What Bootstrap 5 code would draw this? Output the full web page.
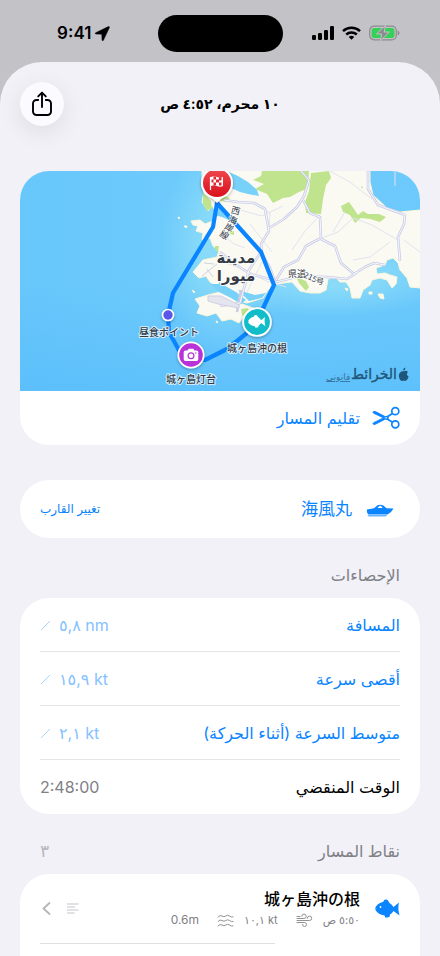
<!DOCTYPE html>
<html lang="ar" dir="rtl">
<head>
<meta charset="utf-8">
<meta name="viewport" content="width=device-width, initial-scale=1">
<title>١٠ محرم، ٤:٥٢ ص</title>
<link href="https://cdn.jsdelivr.net/npm/bootstrap@5.3.0/dist/css/bootstrap.min.css" rel="stylesheet">
<style>
  :root { --blue: #0a84ff; --paper: #f2f1f8; }
  body { background: #c3c2c7; color: #000; font: 17px/24px Inter, "Noto Sans CJK JP", "DejaVu Sans", sans-serif; }
  .screen { height: 100vh; overflow: hidden; }
  .status { height: 62px; flex: none; }
  .status-side { flex: 1; padding-top: 4px; }
  .status-time { padding-left: 10px; }
  .status-icons { padding-right: 10px; }
  .island { width: 125px; height: 37px; border-radius: 19px; background: #000; margin-top: 4px; }
  .sheet { background: var(--paper); border-radius: 42px 42px 0 0; padding: 20px 20px 0; }
  .topbar { display: grid; grid-template-columns: 44px 1fr 44px; align-items: center; margin-bottom: 45px; }
  .topbar h1 { font-size: 14px; line-height: 24px; font-weight: 600; }
  .share { width: 44px; height: 44px; background: #fbfaff; box-shadow: 0 6px 24px rgba(0,0,0,.09); border: 0; }
  .panel { background: #fff; border-radius: 29px; overflow: hidden; flex: none; }
  .panel-open { border-radius: 29px 29px 0 0; flex: 1 0 auto; }
  .map { display: block; width: 100%; height: 220px; }
  .line { height: 54px; padding: 0 20px; }
  .stat:not(:last-child)::after { content: ""; position: absolute; bottom: 0; left: 20px; right: 20px; border-top: 1px solid #e6e6e8; }
  .blue, .blue:hover { color: var(--blue); }
  .value { color: #84c1ff; font-size: 16px; }
  .gray { color: #808085; }
  .faint { color: #b6b6bb; }
  .ar { font-size: 16px; }
  .small-ar { font-size: 12px; line-height: 18px; }
  .boat { height: 58px; margin-top: 35px; padding: 0 20px; }
  .group-title { height: 24px; margin: 25px 0 11px; padding: 0 20px; flex: none; }
  .group-title h2 { font-size: 16px; line-height: 24px; font-weight: 500; }
  .point { height: 69px; padding: 13px 20px 0; }
  .point-name { font-size: 16px; font-weight: 500; }
  .point-side { padding-top: 15px; padding-left: 2px; }
  .point-rule { border-top: 1px solid #e0e0e3; margin-left: 20px; margin-right: 145px; }
  .icon-slot { width: 40px; flex: none; }
  .meta { font-size: 11px; line-height: 18px; }
  .meta svg { margin-right: 10px; margin-left: 18px; }
  .meta-latin { font-size: 12px; }
  .map text { font-family: "Noto Sans CJK JP", "DejaVu Sans", sans-serif; fill: #333a45; stroke: #fff; stroke-opacity: .75; stroke-width: 2px; paint-order: stroke; stroke-linejoin: round; }
  .map .ar-label { font-family: "DejaVu Sans", sans-serif; }
  .map .brand-label { font-family: "DejaVu Sans", sans-serif; fill: #1f5579; stroke: #1f5579; stroke-width: .5px; }
  .map .legal-label { font-family: "DejaVu Sans", sans-serif; fill: #35729c; stroke: none; }
</style>
<script src="https://cdn.jsdelivr.net/npm/bootstrap@5.3.0/dist/js/bootstrap.bundle.min.js"></script>
</head>
<body>
<div class="screen d-flex flex-column">
  <header class="status d-flex align-items-center" dir="ltr">
    <div class="status-side status-time d-flex justify-content-center align-items-center gap-1 fw-semibold">
      <span>9:41</span>
      <svg width="15" height="15" viewBox="0 0 15 15" aria-hidden="true"><path d="M13.400.6.700 6.700c-.8.4-.6 1.300.3 1.300l5.800.2.2 5.800c0 .9 1 1.100 1.400.3L14.400 1.600c.3-.7-.3-1.300-1-1z" stroke="#000" stroke-width=".5"/></svg>
    </div>
    <div class="island"></div>
    <div class="status-side status-icons d-flex justify-content-center align-items-center gap-2">
      <svg width="22" height="14" viewBox="0 0 22 14" aria-hidden="true"><rect y="9" width="4" height="5" rx="1.200"/><rect x="6" y="7" width="4" height="7" rx="1.200"/><rect x="12" y="4" width="4" height="10" rx="1.200"/><rect x="18" y="0" width="4" height="14" rx="1.200"/></svg>
      <svg width="19" height="14" viewBox="0 0 19 14" fill="none" stroke="#000" stroke-width="2.500" aria-hidden="true"><path d="M1 5.200a12.300 12.300 0 0 1 17 0M4.200 8.500a7.700 7.700 0 0 1 10.600 0"/><path d="M9.500 13.700 6.800 11a4 4 0 0 1 5.400 0z" fill="#000" stroke="none"/></svg>
      <svg width="31" height="16" viewBox="0 0 31 16" aria-hidden="true"><rect x=".7" y="1.200" width="26.600" height="13.600" rx="4.500" fill="none" stroke="#8c8c90" stroke-width="1.200"/><rect x="2.600" y="3" width="22.800" height="10" rx="2.800" fill="#34d058"/><path d="M28.700 5.500v5c1-.4 1.800-1.300 1.800-2.500s-.8-2.100-1.800-2.500z" fill="#8c8c90"/><path d="M16.500.3 7.500 9h5.200l-1.300 6.800L20.500 7h-5.300z" fill="#8c8c90" stroke="#c3c2c7" stroke-width="1"/></svg>
    </div>
  </header>

  <main class="sheet flex-grow-1 d-flex flex-column">
    <div class="topbar">
      <span></span>
      <h1 class="m-0 text-center">١٠ محرم، ٤:٥٢ ص</h1>
      <button class="share btn rounded-circle p-0 d-flex align-items-center justify-content-center" type="button" aria-label="مشاركة">
        <svg width="22" height="26" viewBox="0 0 22 26" fill="none" stroke="#000" stroke-width="1.900" stroke-linecap="round" stroke-linejoin="round"><path d="M7.200 9H5.500A3.500 3.500 0 0 0 2 12.500v8A3.500 3.500 0 0 0 5.500 24h11a3.500 3.500 0 0 0 3.500-3.500v-8A3.500 3.500 0 0 0 16.500 9h-1.700M11 16V1.800M7.200 5.400 11 1.600l3.800 3.800"/></svg>
      </button>
    </div>

    <section class="panel">
      <svg class="map" viewBox="20 171 400 220" preserveAspectRatio="xMidYMid slice" direction="ltr" role="img" aria-label="خريطة المسار">
        <defs>
          <linearGradient id="sea" x1="0" y1="0" x2="1" y2="0"><stop offset="0" stop-color="#58bdfa"/><stop offset=".5" stop-color="#6fcbfb"/><stop offset="1" stop-color="#68c6fc"/></linearGradient>
          <linearGradient id="deep" x1="0" y1="0" x2="0" y2="1"><stop offset=".5" stop-color="#55bbfb" stop-opacity="0"/><stop offset="1" stop-color="#55bbfb" stop-opacity=".6"/></linearGradient>
          <radialGradient id="shoal"><stop offset=".3" stop-color="#90dff8" stop-opacity=".8"/><stop offset="1" stop-color="#90dff8" stop-opacity="0"/></radialGradient>
          <linearGradient id="flagred" x1="0" y1="0" x2="0" y2="1"><stop offset="0" stop-color="#f04a4e"/><stop offset="1" stop-color="#d80f1c"/></linearGradient>
          <filter id="shade" x="-40%" y="-40%" width="180%" height="180%"><feDropShadow dx="0" dy="1" stdDeviation="1.500" flood-opacity=".35"/></filter>
        </defs>
        <rect x="-400" y="-100" width="1240" height="700" fill="url(#sea)"/>
        <rect x="-400" y="171" width="1240" height="220" fill="url(#deep)"/>
        <ellipse cx="225" cy="245" rx="65" ry="105" fill="url(#shoal)"/>
        <ellipse cx="330" cy="275" rx="125" ry="42" fill="url(#shoal)"/>
        <g fill="#fafaf2" stroke="#fbf6d9" stroke-width="1">
          <path d="M202 171 202 186 204 192 202 202 208 211 212 206 217 213 213 221 205 224 200 220 191 221 193 225 198 226 196 231 203 233 202 240 210 238 213 246 219 251 217 257 203 260 193 272 199 278 206 276 210 282 217 287 219 281 226 290 235 300 247 303 263 298 268 290 275 284 292 282 300 291 310 293 320 293 326 290 328 279 335 277 340 282 346 282 350 288 352 298 360 298 363 290 370 285 372 280 380 278 387 280 392 288 396 284 397 277 390 275 385 273 377 274 376 268 385 265 387 260 393 258 398 263 400 270 407 278 410 287 420 288 440 288 440 211 420 210 400 212 387 208 373 195 370 182 370 171 370 160 202 160Z"/>
          <path d="M195 299 208 295 220 292 233 297 242 304 253 308 245 315 239 323 231 319 222 321 216 313 207 316 197 313 200 306Z"/>
          <path d="M178 217l2 1-1 1zM184 226l3 0-1 2zM192 290l3 2-1 1zM216 321l2 1-1 1zM378 294l5 0 1 5-4-1zM369 292l3 0 0 2-3 0zM345 288l3 1-1 2z"/>
        </g>
        <g fill="#bfe48d">
          <path d="M253 180 261 176 262 171 309 171 308 188 297 193 290 197 283 198 273 203 267 194 255 189 264 184Z"/>
          <path d="M311 173 329 171 331 178 326 185 323 199 321 214 306 213 305 202 309 191Z"/>
          <path d="M341 206 349 202 354 209 358 215 363 211 368 214 379 214 386 217 380 222 370 219 361 218 355 223 350 215 343 212Z"/>
          <path d="M203 193 211 201 212 208 207 211 203 204ZM218 194l12 4-4 4-8-2zM228 229l6 2 0 4-4-1zM215 246l4 0-1 6-3-3zM241 309l6-1 5 5-5 5-5-3zM296 277l10 4 3 6-3 4-7-8zM361 186l2 1-1 2z"/>
        </g>
        <g fill="#78d1f8">
          <path d="M229 172 238 176 248 182 257 190 259 196 248 194 240 192 231 188Z"/>
          <path d="M216 203 224 209 231 215 235 219 229 220 222 217 214 215ZM210 284 222 284 236 292 246 300 241 304 231 298 219 292ZM238 290l17 5 11-2-4 5-13 3z"/>
        </g>
        <g fill="none" stroke="#e2e2ef" stroke-width="1">
          <path d="M259 205 270 213 269 228M330 171 350 182 372 199M240 210 262 216 283 206M320 215 305 231 292 250M220 232 234 244 245 248M353 260 370 257 390 242M322 238 338 232 353 218 372 225 398 240M345 212l-12 20M250 224l22 28M222 262l22 7 22 12 20 6M262 262l-15 30M395 172l0 14M404 240l16 12"/>
        </g>
        <g fill="none" stroke="#c9cce4" stroke-width="2.600" stroke-linejoin="round">
          <path d="M224 200 238 202 254 203 265 209 269 231 261 244 262 254 270 268 275 282M269 228 284 219 297 207 304 196 309 180 301 171M302 198 310 213 320 217 321 238 306 246 298 260 284 267 276 280M321 239 335 246 341 263 354 274 365 267 374 263 385 265M405 214 404 224 398 237 400 261M368 171 368 189 378 205 405 215M276 282 300 276 327 277 347 279 358 272M261 252 249 270 240 303 220 306M220 252 232 262 250 274 274 280M241 290l-4 22"/>
        </g>
        <g fill="none" stroke="#f7f7ff" stroke-width="1"><path d="M224 200 238 202 254 203 265 209 269 231 261 244 262 254 270 268 275 282M269 228 284 219 297 207 304 196 309 180 301 171M302 198 310 213 320 217 321 238 306 246 298 260 284 267 276 280M321 239 335 246 341 263 354 274 365 267 374 263 385 265M405 214 404 224 398 237 400 261M368 171 368 189 378 205 405 215M276 282 300 276 327 277 347 279 358 272M261 252 249 270 240 303 220 306M220 252 232 262 250 274 274 280"/></g>
        <path d="M208 296 221 296 239 305 239 308 218 304 208 301ZM202 276l15-12M207 269l6 8M204 263l10 1" fill="#e5e5f0" stroke="#cfd1e2" stroke-width="1"/>
        <path d="M217 203 213 227 173 293 168 315 169 332 181 354 205 360 227 349 247 333 257 321 274 285 261 252Z" fill="none" stroke="#0a84ff" stroke-width="4.200" stroke-linejoin="round"/>

        <g font-size="9" text-anchor="middle">
          <text transform="rotate(14 236 213)" x="235" y="214">西</text><text transform="rotate(20 232 222)" x="232" y="223">海</text><text transform="rotate(28 228 230)" x="228" y="231">岸</text><text transform="rotate(32 223 237)" x="223" y="238">線</text>
          <text x="297" y="277">県道</text><text transform="rotate(25 310 278)" x="310" y="280" font-size="8">215</text><text transform="rotate(8 319 281)" x="320" y="284" font-size="8">号</text>
        </g>
        <g font-size="15" font-weight="700" text-anchor="middle"><text class="ar-label" x="236" y="263">مدينة</text><text class="ar-label" x="236" y="281">ميورا</text></g>
        <g font-size="10" font-weight="500" text-anchor="middle">
          <text x="169" y="336">昼食ポイント</text><text x="257" y="352">城ヶ島沖の根</text><text x="191" y="383">城ヶ島灯台</text>
        </g>

        <g filter="url(#shade)">
          <path d="M209 195 217 203 225 195Z" fill="#fff"/><circle cx="217" cy="183" r="16" fill="#fff"/>
          <circle cx="168" cy="315" r="6.300" fill="#fff"/><circle cx="191" cy="355" r="13.500" fill="#fff"/><circle cx="257" cy="322" r="14.800" fill="#fff"/>
        </g>
        <circle cx="217" cy="183" r="14" fill="url(#flagred)"/>
        <path d="M210.500 177v13" stroke="#fff" stroke-width="1.200"/><path d="M211 177q3-1.500 6 0t6 0v9q-3 1.500-6 0t-6 0z" fill="#fff"/>
        <path d="M213.500 176.500h2.500v3h-2.500zM219 177.500h2.500v3H219zM216 179.500h3v3h-3zM211.500 179.500h2v3h-2zM213.500 182.500h2.500v2.700h-2.500zM219 182.500h2.500v3H219z" fill="#df2632"/>
        <circle cx="168" cy="315" r="4.700" fill="#5c57e8"/>
        <circle cx="191" cy="355" r="11.800" fill="#b832d8"/>
        <path d="M185.500 350.500h2l1.200-1.800h4.600l1.200 1.800h2q1.800 0 1.800 1.800v7q0 1.800-1.800 1.800h-11q-1.800 0-1.800-1.800v-7q0-1.800 1.800-1.800z" fill="#fff"/><circle cx="191" cy="355.800" r="2.900" fill="#fff" stroke="#b832d8" stroke-width="1.200"/><circle cx="195.800" cy="353" r=".7" fill="#b832d8"/>
        <circle cx="257" cy="322" r="12.900" fill="#10bdc9"/>
        <path transform="translate(248 314.500) scale(.71)" d="M0 9.500C1.500 5.500 5 3.700 8 3L9.500.8Q12 .2 13 1.600L14.500 4Q17 5.500 18.500 8L24 3.500Q22.500 9.500 24.500 16.500L18.500 12Q17 14.500 15 15.500L14.500 18 10.500 18.800 9.500 16.500C5.500 16 2 14 0 10.500l2-.5z" fill="#fff"/>

        <text class="brand-label" x="351" y="379" font-size="14">الخرائط</text>
        <text class="legal-label" x="326" y="380" font-size="9" text-decoration="underline">قانوني</text>
        <path d="M405.500 367.500q0 2.600-2.500 3 0-2.500 2.500-3zM403.500 371.300q2.700-1.300 4.500.7-2.500 2.200.6 4.800-1.500 4.400-3.600 4.100-1.500-.6-2.700 0c-2 .6-4-3.600-3.300-6.300.6-2.700 2.700-3.900 4.500-3.300z" fill="#1f5579"/>
      </svg>
      <button class="line btn border-0 w-100 d-flex align-items-center blue" type="button">
        <span class="icon-slot d-flex"><svg width="28" height="24" viewBox="0 0 28 24" fill="none" stroke="#0a84ff" stroke-width="1.700" aria-hidden="true"><circle cx="23.300" cy="5.200" r="3.500"/><circle cx="23.300" cy="18.300" r="3.500"/><path d="M20.500 7.500 14 11.500M20.500 16.200 14 12.300"/><path d="M.800 6Q1.500 5 3.500 5.600L16.500 12.300 15 13.600 2 7.400Q1 6.800.8 6zM.8 17.800Q1.500 18.800 3.500 18.200L16.500 11.500 15 10.200 2 16.400Q1 17 .8 17.800z" fill="#0a84ff" stroke-width=".8" stroke-linejoin="round"/><circle cx="14.500" cy="11.900" r=".6" fill="#fff" stroke="none"/></svg></span>
        <span class="ar">تقليم المسار</span>
      </button>
    </section>

    <section class="panel boat d-flex align-items-center justify-content-between">
      <div class="d-flex align-items-center gap-2 blue">
        <div class="icon-slot text-center"><svg width="28" height="13" viewBox="0 0 28 13" fill="#0a84ff" aria-hidden="true"><path d="M1 5.500 8 4.300 11.500 1.300Q14 .2 17 1.200l3.500 3L27.500 4.600Q26 8 21.500 10.600H2.500Q.3 8.500 1 5.500zM11.500 4l5.200.1-2-2.300q-1.700 0-3.200 2.200z" fill-rule="evenodd"/><path d="M1.500 11h20l-2 1.400H3q-1.200-.2-1.500-1.400z" opacity=".6"/></svg></div>
        <span>海風丸</span>
      </div>
      <button class="btn border-0 p-0 small-ar blue" type="button">تغيير القارب</button>
    </section>

    <div class="group-title gray"><h2 class="m-0">الإحصاءات</h2></div>
    <section class="panel">
      <div class="line stat position-relative d-flex align-items-center justify-content-between"><span class="blue ar">المسافة</span><span class="value d-flex align-items-center gap-2" dir="ltr"><svg width="11" height="11" viewBox="0 0 11 11" stroke="#a9d2fb" aria-hidden="true"><path d="M1 10 10 1"/></svg><span>٥,٨ nm</span></span></div>
      <div class="line stat position-relative d-flex align-items-center justify-content-between"><span class="blue ar">أقصى سرعة</span><span class="value d-flex align-items-center gap-2" dir="ltr"><svg width="11" height="11" viewBox="0 0 11 11" stroke="#a9d2fb" aria-hidden="true"><path d="M1 10 10 1"/></svg><span>١٥,٩ kt</span></span></div>
      <div class="line stat position-relative d-flex align-items-center justify-content-between"><span class="blue ar">متوسط السرعة (أثناء الحركة)</span><span class="value d-flex align-items-center gap-2" dir="ltr"><svg width="11" height="11" viewBox="0 0 11 11" stroke="#a9d2fb" aria-hidden="true"><path d="M1 10 10 1"/></svg><span>٢,١ kt</span></span></div>
      <div class="line stat position-relative d-flex align-items-center justify-content-between"><span class="ar">الوقت المنقضي</span><span class="ar gray">2:48:00</span></div>
    </section>

    <div class="group-title gray d-flex justify-content-between"><h2 class="m-0">نقاط المسار</h2><span class="faint">٣</span></div>
    <section class="panel panel-open">
      <div class="point d-flex">
        <div class="icon-slot d-flex pt-2 mt-1"><svg width="25" height="19" viewBox="0 0 25 19" aria-hidden="true"><path d="M0 9.500C1.500 5.500 5 3.700 8 3L9.500.8Q12 .2 13 1.600L14.500 4Q17 5.500 18.500 8L24 3.500Q22.500 9.500 24.500 16.500L18.500 12Q17 14.500 15 15.500L14.500 18 10.500 18.800 9.500 16.500C5.500 16 2 14 0 10.500l2-.5z" fill="#0a84ff"/><circle cx="5.500" cy="8" r=".9" fill="#fff"/></svg></div>
        <div class="flex-grow-1">
          <div class="point-name">城ヶ島沖の根</div>
          <div class="meta gray d-flex align-items-center">
            <span>٥:٥٠ ص</span>
            <svg width="17" height="14" viewBox="0 0 17 14" fill="none" stroke="#929297" stroke-linecap="round" aria-hidden="true"><path d="M1 5.500h7a2.200 2.200 0 1 0-2.200-2.200M1 7.500h12.500a2.200 2.200 0 1 0-2.200-2.200M1 9.500h7.500a2 2 0 1 1-2 2M1 3.500h3"/></svg>
            <span dir="ltr">١٠,١ kt</span>
            <svg width="17" height="13" viewBox="0 0 17 13" fill="none" stroke="#929297" stroke-linecap="round" aria-hidden="true"><path d="M1 3Q3 .5 5 2t3.800 0 3.700 0T16 3M1 7.500Q3 5 5 6.500t3.800 0 3.700 0T16 7.500M1 12Q3 9.500 5 11t3.800 0 3.700 0T16 12"/></svg>
            <span class="meta-latin" dir="ltr">0.6m</span>
          </div>
        </div>
        <div class="point-side d-flex align-items-center gap-3 align-self-start">
          <svg width="12" height="11" viewBox="0 0 12 11" stroke="#c4c4c8" aria-hidden="true"><path d="M0 1h11.500M0 4h8M0 7h11.500M0 10h7.500"/></svg>
          <svg width="9" height="13" viewBox="0 0 9 13" fill="none" stroke="#b5b5ba" stroke-width="1.800" stroke-linecap="round" stroke-linejoin="round" aria-hidden="true"><path d="M7.500 1 1.500 6.500l6 5.500"/></svg>
        </div>
      </div>
      <div class="point-rule"></div>
    </section>
  </main>
</div>
</body>
</html>
